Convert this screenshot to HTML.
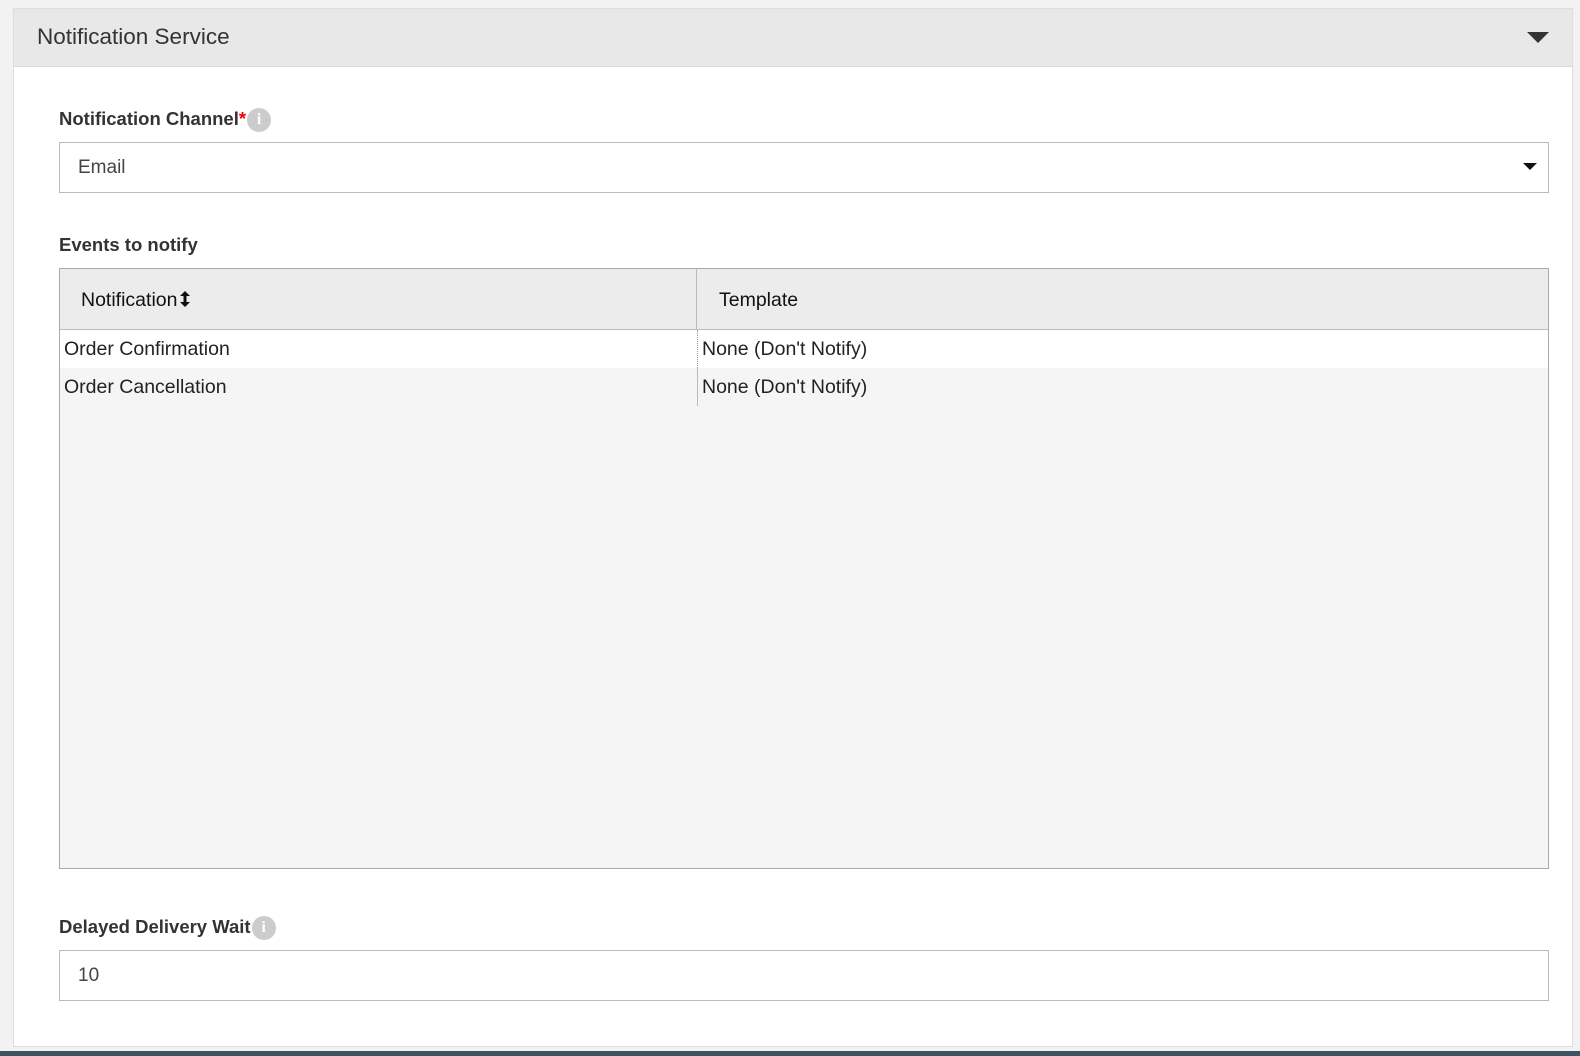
<!DOCTYPE html>
<html><head><style>
*{box-sizing:border-box;margin:0;padding:0}
body{width:1580px;height:1056px;background:#f2f2f2;font-family:"Liberation Sans",sans-serif;position:relative;overflow:hidden;color:#333}
.panel{position:absolute;left:13px;top:8px;width:1560px;height:1039px;background:#fff;border:1px solid #ddd}
.hdr{position:absolute;left:0;top:0;right:0;height:58px;background:#e8e8e8;border-bottom:1px solid #d8d8d8}
.hdr span{position:absolute;left:23px;top:15px;font-size:22.5px;color:#333}
.tri{position:absolute;width:0;height:0;border-left:11px solid transparent;border-right:11px solid transparent;border-top:11px solid #333}
.lbl{position:absolute;left:45px;font-size:18.5px;font-weight:bold;color:#333}
.info{display:inline-block;width:24px;height:24px;border-radius:50%;background:#ccc;color:#fff;font-family:"Liberation Serif",serif;font-weight:bold;font-size:16px;text-align:center;line-height:24px;vertical-align:middle;margin-left:1px}
.inp{position:absolute;left:45px;width:1490px;height:51px;border:1px solid #bbb;background:#fff;font-size:19px;color:#444;padding:14px 0 0 18px}
.tbl{position:absolute;left:45px;top:259px;width:1490px;height:601px;border:1px solid #aaa;background:#f5f5f5}
.th{position:absolute;top:0;height:61px;background:#ececec;border-bottom:1px solid #bbb;font-size:19.5px;color:#111;padding-top:20px}
.cell{position:absolute;font-size:19.5px;color:#222;padding-top:8px;height:38px}
</style></head><body>
<div class="panel">
 <div class="hdr"><span>Notification Service</span><div class="tri" style="left:1513px;top:23px"></div></div>
 <div class="lbl" style="top:99px">Notification Channel<span style="color:#e00">*</span><span class="info">i</span></div>
 <div class="inp" style="top:133px">Email<div class="tri" style="left:1463px;top:20px;border-left-width:7px;border-right-width:7px;border-top-width:7px;border-top-color:#111"></div></div>
 <div class="lbl" style="top:225px">Events to notify</div>
 <div class="tbl">
  <div class="th" style="left:0;width:637px;padding-left:21px;border-right:1px solid #bbb">Notification<svg width="12" height="16" viewBox="0 0 12 16" style="margin-left:2px;vertical-align:-1px"><path d="M6 0L11 5H7.5V11H11L6 16L1 11H4.5V5H1Z" fill="#111"/></svg></div>
  <div class="th" style="left:637px;width:851px;padding-left:22px">Template</div>
  <div class="cell" style="top:61px;left:0;width:1488px;background:#fff"></div>
  <div class="cell" style="top:61px;left:4px">Order Confirmation</div>
  <div class="cell" style="top:61px;left:637px;width:851px;border-left:1px dotted #999;padding-left:4px;background:#fff">None (Don't Notify)</div>
  <div class="cell" style="top:99px;left:4px">Order Cancellation</div>
  <div class="cell" style="top:99px;left:637px;border-left:1px solid #bbb;padding-left:4px">None (Don't Notify)</div>
 </div>
 <div class="lbl" style="top:907px">Delayed Delivery Wait<span class="info">i</span></div>
 <div class="inp" style="top:941px">10</div>
</div>
<div style="position:absolute;left:0;top:1051px;width:1580px;height:5px;background:#3e5560"></div>
</body></html>
